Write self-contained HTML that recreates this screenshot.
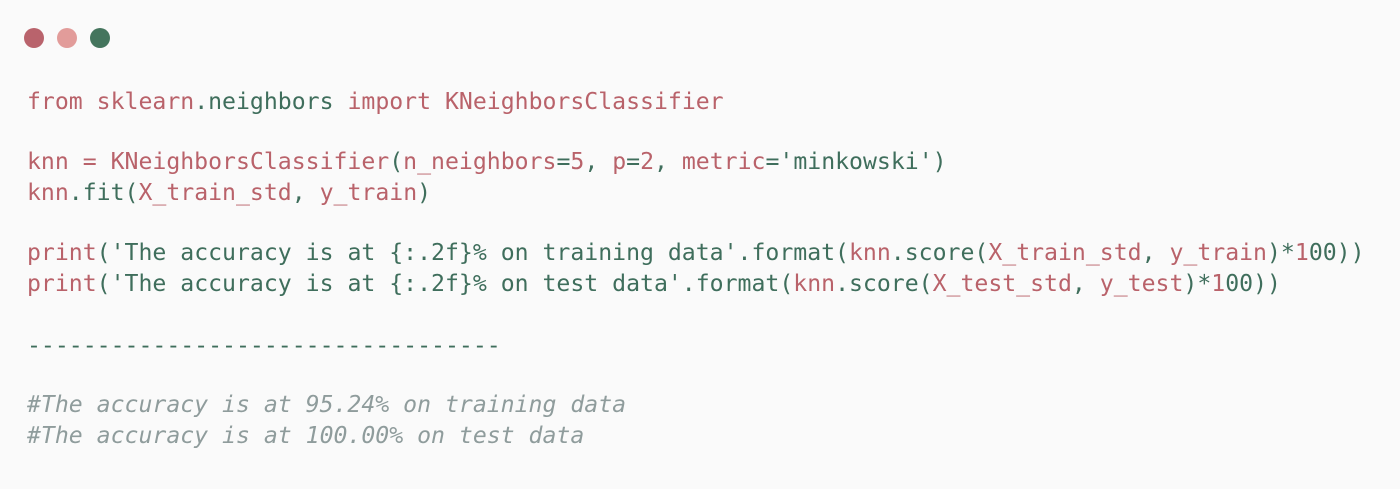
<!DOCTYPE html>
<html><head><style>
body{margin:0;width:1400px;height:489px;background:#fafafa;overflow:hidden;position:relative;font-family:"DejaVu Sans Mono","Liberation Mono",monospace;color:#3f6e5c}
.d{position:absolute;top:28px;width:20px;height:20px;border-radius:50%}
.l{position:absolute;left:27px;line-height:31px;white-space:pre;font-size:23.15px}
.r{color:#b9626a}.g{color:#3f6e5c}.c{color:#8f9c9c;font-style:italic}
</style></head><body>
<div class="d" style="left:24px;background:#b9636c"></div>
<div class="d" style="left:57px;background:#e29c9a"></div>
<div class="d" style="left:90px;background:#44755d"></div>
<div class="l" style="top:87px"><span class="r">from sklearn</span>.neighbors <span class="r">import KNeighborsClassifier</span></div>
<div class="l" style="top:147px"><span class="r">knn = KNeighborsClassifier</span>(<span class="r">n_neighbors</span>=<span class="r">5</span>, <span class="r">p</span>=<span class="r">2</span>, <span class="r">metric</span>='minkowski')</div>
<div class="l" style="top:178px"><span class="r">knn</span>.fit(<span class="r">X_train_std</span>, <span class="r">y_train</span>)</div>
<div class="l" style="top:238px"><span class="r">print</span>('The accuracy is at {:.2f}% on training data'.format(<span class="r">knn</span>.score(<span class="r">X_train_std</span>, <span class="r">y_train</span>)*<span class="r">1</span>00))</div>
<div class="l" style="top:269px"><span class="r">print</span>('The accuracy is at {:.2f}% on test data'.format(<span class="r">knn</span>.score(<span class="r">X_test_std</span>, <span class="r">y_test</span>)*<span class="r">1</span>00))</div>
<div class="l" style="top:331px">----------------------------------</div>
<div class="l c" style="top:390px">#The accuracy is at 95.24% on training data</div>
<div class="l c" style="top:421px">#The accuracy is at 100.00% on test data</div>
</body></html>
